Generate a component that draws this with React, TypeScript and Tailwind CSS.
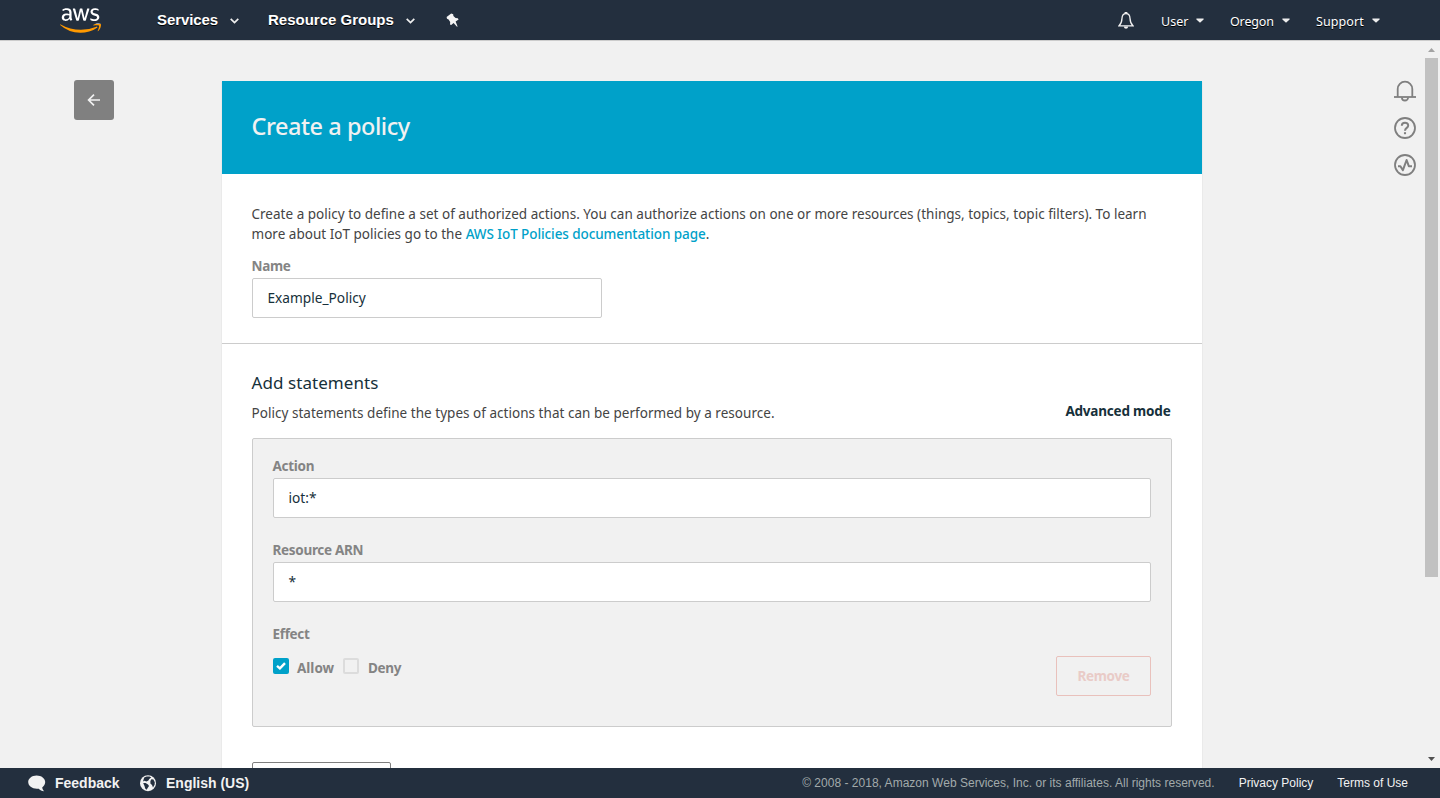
import React from 'react';
import { FaAws } from 'react-icons/fa';

function AwsLogo() {
  return (
    <div className="ml-[60px] mt-[3.5px] h-[33px] w-[41px] self-start">
      <svg width="0" height="0" className="absolute">
        <defs>
          <linearGradient id="aws-fill" gradientUnits="userSpaceOnUse" x1="0" y1="0" x2="0" y2="512">
            <stop offset="0.6" stopColor="#ffffff" />
            <stop offset="0.6" stopColor="#ff9900" />
          </linearGradient>
        </defs>
      </svg>
      <FaAws className="h-[33px] w-[41px] fill-[url(#aws-fill)]" />
    </div>
  );
}

function Chevron() {
  return (
    <svg width="9" height="6" viewBox="0 0 9 6" className="mt-[2px] shrink-0" fill="none" stroke="#eeeeee" strokeWidth="1.7">
      <path d="M0.7 0.8 L4.5 4.5 L8.3 0.8" />
    </svg>
  );
}

function Caret() {
  return (
    <svg width="8" height="5" viewBox="0 0 8 5" className="mt-[1px] shrink-0" fill="#eeeeee">
      <path d="M0.4 0.5 H7.6 V1.4 L4 4.8 L0.4 1.4 Z" />
    </svg>
  );
}

function Pin() {
  return (
    <svg width="14" height="15" viewBox="0 0 14 15" className="shrink-0" fill="#f5f5f5">
      <path d="M5.2 0.6 L7.2 1.3 L7.4 3 L9.6 5 L11.8 5.2 L12.6 6.4 L9.6 8.6 L11.6 13.4 L11 13.8 L7.6 10 L5.2 12 L4 11.4 L4.2 9 L2.6 6.4 L1 5.8 L0.6 4 Z" />
    </svg>
  );
}

function HeaderBell() {
  return (
    <svg width="16" height="18" viewBox="0 0 16 18" className="mt-[2px] shrink-0" fill="none" stroke="#f2f2f2" strokeWidth="1.3">
      <path d="M8 1.7 C5.2 1.7 4.1 3.8 4 6.2 C3.9 9.8 3.4 11.6 0.9 13.9 H15.1 C12.6 11.6 12.1 9.8 12 6.2 C11.9 3.8 10.8 1.7 8 1.7 Z" />
      <path d="M6.9 1.4 A1.1 0.9 0 0 1 9.1 1.4" />
      <path d="M5.9 14.6 H10.1 C10 17.6 6 17.6 5.9 14.6 Z" fill="#f2f2f2" stroke="none" />
    </svg>
  );
}

function RailBell() {
  return (
    <svg width="22" height="22" viewBox="0 0 22 22" fill="none" stroke="#7f7f7f" strokeWidth="1.8">
      <path d="M0 17 H22" />
      <path d="M3.7 17 V9 A7.3 7.3 0 0 1 18.3 9 V17" />
      <path d="M7.9 17.4 A3.1 3.1 0 0 0 14.1 17.4" />
    </svg>
  );
}

function RailHelp() {
  return (
    <svg width="22" height="22" viewBox="0 0 22 22" fill="none" stroke="#7f7f7f" strokeWidth="1.8">
      <circle cx="11" cy="11" r="10" />
      <path d="M7.8 8.7 C7.8 4.7 14.2 4.7 14.2 8.5 C14.2 11 11 10.8 11 13.8" strokeWidth="2" />
      <path d="M11 15.2 V17.2" strokeWidth="2.1" />
    </svg>
  );
}

function RailPulse() {
  return (
    <svg width="22" height="22" viewBox="0 0 22 22" fill="none" stroke="#7f7f7f" strokeWidth="1.8">
      <circle cx="11" cy="11" r="10" />
      <path d="M4 12.2 H6.4 L8.9 16.2 L12.6 6 L14.8 12.2 H18" strokeWidth="2" strokeLinejoin="round" />
    </svg>
  );
}

function Speech() {
  return (
    <svg width="18" height="17" viewBox="0 0 18 17" className="shrink-0" fill="#f2f2f2">
      <path d="M8.6 0.4 C13.4 0.4 17.2 3.3 17.2 7.1 C17.2 9.3 16 11.2 14.2 12.4 C14.4 13.9 15.1 15.1 16.2 16.2 C13.8 16.1 12 15.2 10.8 13.7 C5 14.6 0.2 11.3 0.2 7.1 C0.2 3.3 3.9 0.4 8.6 0.4 Z" />
    </svg>
  );
}

function Globe() {
  return (
    <svg width="17" height="17" viewBox="0 0 17 17" className="shrink-0">
      <circle cx="8" cy="8.2" r="8" fill="#f2f2f2" />
      <path d="M4.2 2.6 L6.6 1.6 L9.6 1.4 L11.2 2.4 L9.2 4 L8.4 5.4 L6.4 6.4 L4.4 5.8 L3 6.6 Z" fill="#232f3e" />
      <path d="M3.2 8 L5.6 8 L8 9.4 L9 11 L7.8 12.8 L6.6 14.8 L5.2 13.6 L4.6 11.2 Z" fill="#232f3e" />
      <path d="M11.4 4.2 L13.4 4.4 L14.8 7.2 L14.6 9.8 L13 12.4 L12 10 L10.4 8.4 L10.4 6 Z" fill="#232f3e" />
    </svg>
  );
}

function Label({ children }: { children: React.ReactNode }) {
  return <div className="-ml-[0.5px] h-5 text-[13.5px] leading-5 font-bold tracking-[-0.3px] text-[#848484]">{children}</div>;
}

function Field({ value }: { value: string }) {
  return (
    <div className="mt-[2px] flex h-10 items-center rounded-[2px] border border-[#cccccc] bg-white pl-[14.5px] text-[13.7px] text-[#16303a]">
      {value}
    </div>
  );
}

export default function App() {
  return (
    <div className="flex h-[798px] w-full flex-col overflow-hidden bg-[#f1f1f1] font-['Noto_Sans','Open_Sans',sans-serif]">
      <header className="flex h-10 shrink-0 items-center bg-[#232f3e] text-white">
        <AwsLogo />
        <nav className="ml-14 flex items-center font-['Liberation_Sans',Arial,sans-serif] text-[15px] font-bold [text-shadow:0_1px_0_#000]">
          <span className="w-[73px] tracking-[-0.08px]">Services</span>
          <Chevron />
          <span className="ml-[29px] w-[138px]">Resource Groups</span>
          <Chevron />
          <span className="ml-[31px]"><Pin /></span>
        </nav>
        <div className="mr-[60px] ml-auto flex items-center text-[12.5px] leading-5 [text-shadow:0_1px_0_#000]">
          <HeaderBell />
          <span className="-mb-[2px] ml-[27px] w-[35px] pt-[2px] tracking-[0.05px]">User</span>
          <Caret />
          <span className="-mb-[2px] ml-[26px] w-[52px] pt-[2px] tracking-[-0.15px]">Oregon</span>
          <Caret />
          <span className="-mb-[2px] ml-[26px] w-[56px] pt-[2px] tracking-[0.1px]">Support</span>
          <Caret />
        </div>
      </header>

      <main className="flex min-h-0 flex-1 border-t border-[#cccccc]">
        <button className="mt-[39px] ml-[74px] flex h-10 w-10 shrink-0 items-center justify-center rounded-[3px] bg-[#808080]">
          <svg width="14" height="14" viewBox="0 0 14 14" fill="none" stroke="#f1f1f1" strokeWidth="1.7">
            <path d="M13 7 H2 M7 1.6 L1.6 7 L7 12.4" />
          </svg>
        </button>

        <section className="mt-10 ml-[108px] flex w-[980px] shrink-0 flex-col bg-white shadow-[0_1px_1px_rgba(0,0,0,0.16)]">
          <div className="flex h-[93px] shrink-0 items-center bg-[#00a1c9] pb-px pl-[29.5px]">
            <h1 className="text-[23.5px] font-medium tracking-[-0.45px] text-[#f1f1f1]">Create a policy</h1>
          </div>

          <div className="h-[170px] shrink-0 border-b border-[#cccccc] px-[30px] pt-[30px]">
            <p className="-ml-[0.5px] text-[13.5px] leading-5 tracking-[0.015px] whitespace-nowrap text-[#444444]">
              Create a policy to define a set of authorized actions. You can authorize actions on one or more resources (things, topics, topic filters). To learn
              <br />
              more about IoT policies go to the{' '}
              <a className="font-medium tracking-[-0.08px] text-[#00a1c9]">AWS IoT Policies documentation page</a>.
            </p>
            <div className="mt-3 w-[350px]">
              <Label>Name</Label>
              <Field value="Example_Policy" />
            </div>
          </div>

          <div className="min-h-0 flex-1 px-[30px] pt-[27px]">
            <h2 className="-ml-[0.5px] h-6 text-[17px] leading-6 tracking-[0.07px] text-[#16303a]">Add statements</h2>
            <div className="-ml-[0.5px] flex h-[43px] justify-between pt-2 leading-5">
              <span className="text-[13.5px] tracking-[0.03px] text-[#444444]">Policy statements define the types of actions that can be performed by a resource.</span>
              <span className="-mt-[2px] mr-[1.5px] text-[13.5px] font-bold tracking-[-0.2px] text-[#16303a]">Advanced mode</span>
            </div>

            <div className="h-[289px] rounded-[2px] border border-[#cccccc] bg-[#f1f1f1] px-5 pt-[17px]">
              <Label>Action</Label>
              <Field value="iot:*" />
              <div className="h-[22px]" />
              <Label>Resource ARN</Label>
              <Field value="*" />
              <div className="h-[22px]" />
              <Label>Effect</Label>
              <div className="mt-3 flex items-start text-[13.5px] leading-5 font-bold text-[#848484]">
                <span className="mt-[2px] flex h-4 w-4 items-center justify-center rounded-[2px] bg-[#00a1c9]">
                  <svg width="10" height="8" viewBox="0 0 10 8" fill="none" stroke="#ffffff" strokeWidth="2.4">
                    <path d="M1 3.8 L3.9 6.4 L9 1.2" />
                  </svg>
                </span>
                <span className="mt-[2px] ml-2 w-[46px]">Allow</span>
                <span className="mt-[2px] h-4 w-4 rounded-[2px] border-2 border-[#dcdcdc]" />
                <span className="mt-[2px] ml-[9px] tracking-[-0.3px]">Deny</span>
                <button className="ml-auto flex h-10 w-[95px] items-center justify-center rounded-[2px] border border-[#e9c1bc] text-[13.5px] tracking-[-0.3px] text-[#e9cbc7]">Remove</button>
              </div>
            </div>

            <div className="mt-[35px] h-10 w-[139px] rounded-[2px] border border-[#7f7f7f]" />
          </div>
        </section>

        <aside className="mt-[39px] ml-[192px] flex shrink-0 flex-col gap-[15px]">
          <RailBell />
          <RailHelp />
          <RailPulse />
        </aside>

        <div className="ml-[9px] flex w-[13px] shrink-0 flex-col items-center justify-between pt-[7px] pb-[7px]">
          <div className="flex flex-col items-center">
            <svg width="7" height="4" viewBox="0 0 7 4" fill="#a3a3a3"><path d="M0 4 L3.5 0 L7 4 Z" /></svg>
            <div className="mt-[6px] h-[519px] w-[13px] bg-[#c1c1c1]" />
          </div>
          <svg width="7" height="4" viewBox="0 0 7 4" fill="#505050"><path d="M0 0 L3.5 4 L7 0 Z" /></svg>
        </div>
      </main>

      <footer className="flex h-[30px] shrink-0 items-center bg-[#232f3e] font-['Liberation_Sans',Arial,sans-serif] text-[#f2f2f2]">
        <span className="ml-7"><Speech /></span>
        <span className="ml-[9px] w-[85px] text-[14px] font-bold">Feedback</span>
        <Globe />
        <span className="ml-[9px] text-[14px] font-bold">English (US)</span>
        <span className="ml-auto text-[12px] tracking-[0.015px] text-[#a2aaab]">© 2008 - 2018, Amazon Web Services, Inc. or its affiliates. All rights reserved.</span>
        <span className="ml-6 text-[12px]">Privacy Policy</span>
        <span className="mr-8 ml-6 text-[12px]">Terms of Use</span>
      </footer>
    </div>
  );
}
